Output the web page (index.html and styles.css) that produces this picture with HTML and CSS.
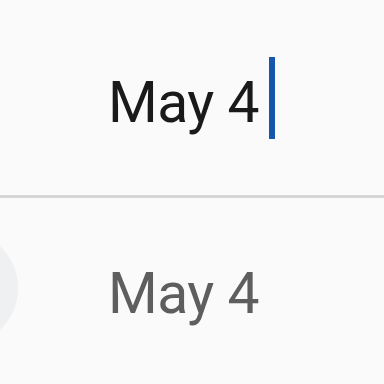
FILE: index.html
```html
<!DOCTYPE html>
<html lang="en">
<head>
<meta charset="UTF-8">
<title>Date</title>
<link rel="stylesheet" href="styles.css">
</head>
<body>

<section class="editor">
  <div class="date-input">May 4</div>
  <div class="caret"></div>
</section>

<div class="divider"></div>

<section class="preview">
  <div class="ripple"></div>
  <div class="date-label">May 4</div>
</section>

</body>
</html>
```

FILE: styles.css
```css
* { margin: 0; padding: 0; box-sizing: border-box; }
html, body { width: 384px; height: 384px; overflow: hidden; }
body { font-family: Roboto, "Liberation Sans", sans-serif; background-color: #fafafa; color: #1a1a1a; }
.editor { display: flex; align-items: flex-start; height: 195px; padding: 57px 0 0 108px; }
.date-input { font-size: 57px; line-height: 57px; margin-top: 17px; letter-spacing: -0.5px; color: #1a1a1a; }
.caret { width: 6px; height: 82px; margin-left: 10px; background-color: #1656ad; }
.divider { height: 3px; background-color: #d5d5d5; }
.preview { position: relative; height: 186px; padding: 67px 0 0 108px; }
.ripple { position: absolute; left: -98px; top: 32px; width: 116px; height: 116px; border-radius: 50%; background-color: #eff0f1; }
.date-label { position: relative; font-size: 57px; line-height: 57px; letter-spacing: -0.5px; color: #5e5e5e; }
```
